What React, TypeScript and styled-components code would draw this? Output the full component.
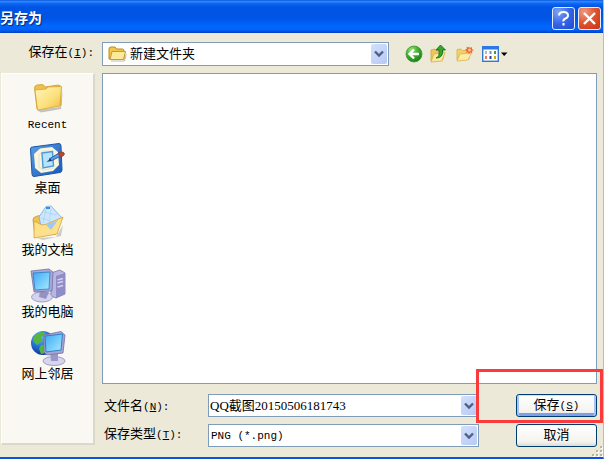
import React from "react";
import styled, { createGlobalStyle, css } from "styled-components";

const cjk = `"Noto Sans CJK SC", sans-serif`;

const GlobalStyle = createGlobalStyle`
  *, *::before, *::after { box-sizing: border-box; }
  body {
    margin: 0;
    background: #fff;
    color: #000;
    font: 13px/16px ${cjk};
  }
`;

const Dialog = styled.main`
  display: flex;
  flex-direction: column;
  height: calc(100vh - 3px);
  min-height: 440px;
  background: #ece9d8;
  border-bottom: 2px solid #0a52e0;
  border-right: 1px solid #a9bce6;
  overflow: hidden;
`;

const TitleBar = styled.header`
  display: flex;
  align-items: center;
  gap: 3px;
  height: 33px;
  flex: none;
  padding: 3px 2px 0 0;
  background: linear-gradient(
    #0a4fd6 0,
    #2a8bff 4%,
    #0a63ee 12%,
    #0054e3 22%,
    #0055e5 55%,
    #0066ff 80%,
    #0064fa 90%,
    #003fc4 100%
  );
`;

const Title = styled.h1`
  flex: 1;
  margin: 0;
  padding-bottom: 2px;
  color: #fff;
  font-size: 14px;
  line-height: 20px;
  font-weight: 700;
  text-shadow: 1px 1px 1px #0a2a80;
`;

const CaptionButton = styled.button<{ $close?: boolean }>`
  display: grid;
  place-items: center;
  width: 23px;
  height: 23px;
  padding: 0;
  border: 1px solid #e6eeff;
  border-radius: 3px;
  background: ${(p) =>
    p.$close
      ? "radial-gradient(circle at 25% 20%, #f09a80, #e0502c 50%, #c43510)"
      : "radial-gradient(circle at 25% 20%, #7fa4f6, #3566e6 50%, #1d49cf)"};
`;

const Content = styled.div`
  display: grid;
  flex: 1;
  min-height: 0;
  grid-template-columns: 94px minmax(0, 1fr);
  grid-template-rows: 24px minmax(0, 1fr);
  column-gap: 7px;
  row-gap: 7px;
  padding: 9px 6px 13px 1px;
`;

const Label = styled.label<{ $end?: boolean; $top?: boolean }>`
  line-height: 18px;
  white-space: nowrap;
  ${(p) => p.$end && css`text-align: right; padding-right: 1px;`}
  ${(p) => p.$top && css`align-self: start;`}
`;

const Key = styled.span`
  font: 11px/16px "Liberation Mono", monospace;
`;

const Toolbar = styled.div`
  display: flex;
  align-items: center;
  gap: 16px;
`;

const Combo = styled.div<{ $wide?: boolean }>`
  display: flex;
  align-items: center;
  height: ${(p) => (p.$wide ? "24px" : "23px")};
  ${(p) => p.$wide && css`flex: 0 1 287px; padding-left: 5px;`}
  min-width: 0;
  border: 1px solid #7f9db9;
  background: #fff;
`;

const fieldText = css<{ $latin?: boolean }>`
  flex: 1;
  min-width: 0;
  height: 20px;
  margin: 0;
  border: 0;
  outline: 0;
  appearance: none;
  background: transparent;
  color: #000;
  font: ${(p) =>
    p.$latin
      ? `11px/20px "Liberation Mono", monospace`
      : `13px/20px "Liberation Serif", ${cjk}`};
`;

const Choice = styled.select<{ $latin?: boolean }>`
  ${fieldText}
  padding: 0 ${(p) => (p.$latin ? "2px" : "3px")};
`;

const TextBox = styled.input`
  ${fieldText}
  padding: 0 1px;
`;

const Drop = styled.span`
  display: grid;
  place-items: center;
  width: 16px;
  align-self: stretch;
  margin: 1px;
  border-radius: 2px;
  background: linear-gradient(135deg, #d3dffd, #b7caf5);
  pointer-events: none;
`;

const Tools = styled.div`
  display: flex;
  align-items: center;
  gap: 6px;
`;

const ToolButton = styled.button`
  display: flex;
  align-items: center;
  padding: 0;
  border: 0;
  background: none;
`;

const Places = styled.nav`
  display: flex;
  flex-direction: column;
  gap: 8px;
  padding-top: 5px;
  background: #f9f8f3;
  border: 1px solid #fff;
  border-right: 2px solid #dbd8c9;
  border-bottom: 2px solid #dbd8c9;
`;

const Place = styled.a<{ $latin?: boolean }>`
  display: flex;
  flex-direction: column;
  align-items: center;
  color: #000;
  text-decoration: none;
  font: ${(p) =>
    p.$latin ? `11px/16px "Liberation Mono", monospace` : `13px/16px ${cjk}`};
`;

const Main = styled.section`
  display: flex;
  flex-direction: column;
  gap: 10px;
  min-width: 0;
`;

const FileList = styled.div`
  flex: 1;
  min-height: 0;
  background: #fff;
  border: 1px solid #7f9db9;
`;

const SaveForm = styled.form`
  display: grid;
  grid-template-columns: 104px minmax(0, 1fr) 81px;
  row-gap: 7px;
  align-items: center;
  padding-left: 2px;
  margin-bottom: -2px;
`;

const FieldCell = styled.div`
  margin-right: 37px;
`;

const Highlighted = styled.div`
  position: relative;
`;

const HighlightFrame = styled.span`
  position: absolute;
  inset: -25px -6px -6px -40px;
  border: 3px solid #fb3b3b;
  pointer-events: none;
`;

const PushButton = styled.button<{ $primary?: boolean }>`
  display: block;
  width: 100%;
  height: 23px;
  padding: 0 0 3px;
  border: 1px solid #003c74;
  border-radius: 3px;
  color: #000;
  font: 13px/18px ${cjk};
  background: linear-gradient(#fff, #f4f3ee 80%, #dedbd0);
  ${(p) =>
    p.$primary &&
    css`
      box-shadow: inset 0 1px #cee0fd, inset 2px 0 #a9c3f4,
        inset -2px 0 #a9c3f4, inset 0 -3px #7f9fe6;
    `}
`;

const Grip = styled.svg`
  display: block;
  align-self: flex-end;
  flex: none;
  margin: -13px 0 0;
`;

const DropArrow = () => (
  <Drop>
    <svg width="10" height="8" viewBox="0 0 10 8" aria-hidden="true">
      <path d="M1 1.5 5 5.5 9 1.5" fill="none" stroke="#4d6185" strokeWidth="2.4" />
    </svg>
  </Drop>
);

const OpenFolder = () => (
  <svg width="19" height="18" viewBox="0 0 19 18" aria-hidden="true">
    <path d="M1 14V4Q1 2 3 2H7L8.500 4H14.500Q16 4 16 6V14Z" fill="#f1c64b" stroke="#b98a1e" />
    <path d="M4 6.500H17.500L15.500 14.500H2Z" fill="#fde99a" stroke="#c79a2b" strokeLinejoin="round" />
    <path d="M3 16H16.500L18.300 9" fill="none" stroke="#8a7a4d" strokeOpacity=".5" />
  </svg>
);

const BackIcon = () => (
  <svg width="18" height="18" viewBox="0 0 18 18" aria-hidden="true">
    <defs>
      <radialGradient id="back" cx=".35" cy=".25" r=".8">
        <stop offset="0" stopColor="#9be07e" />
        <stop offset=".5" stopColor="#3fae2f" />
        <stop offset="1" stopColor="#1d7a17" />
      </radialGradient>
    </defs>
    <circle cx="9" cy="9" r="8" fill="url(#back)" stroke="#3b9a30" strokeWidth=".8" />
    <path d="M14 9H5M9 4.500 4.500 9 9 13.500" fill="none" stroke="#fff" strokeWidth="2.400" />
  </svg>
);

const UpIcon = () => (
  <svg width="20" height="20" viewBox="0 0 20 20" aria-hidden="true">
    <path d="M2 17V6L6 5 7.500 6.500 14 5.500V15Z" fill="#edc55d" stroke="#d5a53a" strokeWidth=".8" />
    <path d="M2 18 5 10 16 8.500 13 17Z" fill="#fce99f" stroke="#d8ad46" strokeWidth=".8" />
    <path d="M7 14Q11 13 10 6H7L11.500 1 16.500 6H13.500Q14.500 14 7 14Z" fill="#35a52d" stroke="#17701a" strokeWidth=".9" />
  </svg>
);

const NewFolderIcon = () => (
  <svg width="20" height="18" viewBox="0 0 20 18" aria-hidden="true">
    <path d="M2 15V4.500L6 4 7.500 5.500H14V14Z" fill="#f3cf68" stroke="#d9ad49" strokeWidth=".8" />
    <path d="M2 16 5 9 16.500 8 13 15Z" fill="#fdeca8" stroke="#dcb352" strokeWidth=".8" />
    <path d="m14 1.500 1 1.500 2-1v2.200l2 .8-2 1 .3 2.200-2-.7-1.300 1.500-1-1.700-2 .4.600-2-1.600-1.200 1.800-.8-.3-2 1.800.800Z" fill="#ef6a35" />
    <circle cx="14.500" cy="5" r="1.500" fill="#ffc29a" />
  </svg>
);

const ViewIcon = () => (
  <svg width="27" height="18" viewBox="0 0 27 18" aria-hidden="true">
    <rect x="1.700" y="1.700" width="15.600" height="14.600" fill="#fff" stroke="#3678cf" strokeWidth="1.400" />
    <path d="M1 1H18V4.500H1Z" fill="#2a79e4" />
    <path d="M4 6h2v3H4z" fill="#a8b9d3" />
    <path d="M8.500 6h2v3h-2z" fill="#8b83c9" />
    <path d="M13 6h2v3h-2z" fill="#31a04a" />
    <path d="M4 11h2v3H4z" fill="#ea7d46" />
    <path d="M8.500 11h2v3h-2z" fill="#27408f" />
    <path d="M13 11h2v3h-2z" fill="#c5a51a" />
    <path d="M20 7.500h6.500L23.200 11Z" fill="#000" />
  </svg>
);

const iconProps = {
  width: 38,
  height: 38,
  viewBox: "0 0 38 38",
  overflow: "visible",
  "aria-hidden": true,
} as const;

const RecentIcon = () => (
  <svg {...iconProps}>
    <defs>
      <linearGradient id="fold" x1="0" y1="0" x2="1" y2="1">
        <stop offset="0" stopColor="#fff6bd" />
        <stop offset=".6" stopColor="#fbdf7a" />
        <stop offset="1" stopColor="#edba3e" />
      </linearGradient>
    </defs>
    <path d="M8 31 31 28 34 11 32 30 12 33.500Z" fill="#80807a" opacity=".45" />
    <path d="M5.500 9Q5.500 6.500 8 6L13 5.500Q15 5.500 16 8L29 6Q32 6 32 9V26L8 30Z" fill="#efc04a" stroke="#cf9c2d" strokeWidth=".8" />
    <path d="M6 11 17 10 19 8 32.500 7.500 31 27 8.500 31Z" fill="url(#fold)" stroke="#d6a535" strokeWidth=".8" strokeLinejoin="round" />
  </svg>
);

const DesktopIcon = () => (
  <svg {...iconProps}>
    <defs>
      <linearGradient id="desk" x1="0" y1="0" x2="1" y2="1">
        <stop offset="0" stopColor="#5c9fe8" />
        <stop offset="1" stopColor="#1557b8" />
      </linearGradient>
    </defs>
    <path d="M1.500 8Q1.500 6 3.500 6L30 2.500Q32 2.500 32 5L33 29Q33 31 31 31.500L5 35.500Q3 35.500 3 33Z" fill="url(#desk)" stroke="#1c56a8" />
    <path d="M5 13 11 7.500 23 6 29 11 30 24 24 30 12 32 6 27Z" fill="#fbf5dc" />
    <path d="M24 10 14 10 10 14V26L14 29 25 27" fill="none" stroke="#e3e6da" strokeWidth="1.200" />
    <path d="M13 12 23.500 10.500 24.500 25 14 27Z" fill="#b9e2fc" stroke="#4a99dc" strokeWidth="1.400" />
    <path d="M20 18 30 12 32 15 22 20Z" fill="#5a9dde" stroke="#174f9a" strokeWidth=".8" />
    <path d="m17.500 21 4-3.500 1 2.500Z" fill="#153b78" />
    <path d="M29 12 34 11Q37 13 34 15L31 16Z" fill="#bf4430" stroke="#8b3830" strokeWidth=".7" />
  </svg>
);

const DocumentsIcon = () => (
  <svg {...iconProps}>
    <path d="M8 35 27 34 34 22 32 33 14 37Z" fill="#777" opacity=".35" />
    <path d="M4 17Q4 14 7 13.500L10 12.500 13 15 28 13 27 31 6 33Z" fill="#efc352" stroke="#cc9830" strokeWidth=".8" />
    <path d="M10 14 17 3.500 22 3 33 15 24 28 13 27Z" fill="#cce7fd" stroke="#76a9dd" strokeWidth=".8" />
    <path d="M15 9 28 12M12 15 27 20M17 6 14 20M22 6 20 20" stroke="#a9d0f2" strokeWidth=".7" />
    <path d="M17 4h4v2h-4z" fill="#3a8ddd" />
    <path d="M5 35V18L13 22 18 21 34 14 28 31Z" fill="#fde18a" stroke="#d3a138" strokeWidth=".8" strokeLinejoin="round" />
    <path d="M17 22 29 17 22 27Z" fill="#9dcaf3" />
  </svg>
);

const screenStops = (
  <>
    <stop offset="0" stopColor="#3ca8f4" />
    <stop offset="1" stopColor="#a8ecff" />
  </>
);

const ComputerIcon = () => (
  <svg {...iconProps} viewBox="0 -3 38 38">
    <defs>
      <linearGradient id="pc" x1="0" y1="0" x2="1" y2="1">{screenStops}</linearGradient>
    </defs>
    <path d="M22 5 31 2 36 5V26L27 30 22 28Z" fill="#b9b7e0" stroke="#7773ac" strokeWidth=".8" />
    <path d="M27 8 36 5V26L27 30Z" fill="#8f8cc8" />
    <path d="M28.500 12 34 10.500M28.500 15 34 13.500M28.500 19 34 17.500" stroke="#d3d2f4" strokeWidth="1.300" />
    <ellipse cx="13" cy="29" rx="10.500" ry="5" fill="#d4d2ed" stroke="#908fbc" strokeWidth=".8" />
    <path d="M11 23 20 24 17 31 10 29Z" fill="#9491c5" />
    <path d="M2 3 20 1 24 4 23 23 5 24Z" fill="#a9a7d5" stroke="#7471a5" strokeWidth=".8" />
    <path d="M4 5 21 4 20 21 6 22Z" fill="url(#pc)" stroke="#287cc6" strokeWidth=".8" />
  </svg>
);

const NetworkIcon = () => (
  <svg {...iconProps} viewBox="0 -3 38 38">
    <defs>
      <radialGradient id="globe" cx=".35" cy=".25" r=".8">
        <stop offset="0" stopColor="#7cc7ff" />
        <stop offset=".5" stopColor="#226fd7" />
        <stop offset="1" stopColor="#102e87" />
      </radialGradient>
      <linearGradient id="net" x1="0" y1="0" x2="1" y2="1">{screenStops}</linearGradient>
    </defs>
    <circle cx="14" cy="13" r="12" fill="url(#globe)" />
    <path d="M4 8Q8 2 14 2L17 4 12 7 14 10 8 15 5 12ZM12 15 18 14 17 23 12 24 10 19Z" fill="#56b63b" />
    <ellipse cx="25" cy="31" rx="11" ry="4.500" fill="#d7d5ed" stroke="#8f8dba" strokeWidth=".8" />
    <path d="M21 22 29 22 29 31 22 31Z" fill="#9b98c9" />
    <path d="M15 5 32 1.500 36 5 34 23 18 25 15 22Z" fill="#a6a4d4" stroke="#7471a7" strokeWidth=".8" />
    <path d="M16 6 33.500 4 32 20 17 22Z" fill="url(#net)" stroke="#2679c0" strokeWidth=".9" />
  </svg>
);

const places = [
  { name: "Recent", Icon: RecentIcon, latin: true },
  { name: "桌面", Icon: DesktopIcon },
  { name: "我的文档", Icon: DocumentsIcon },
  { name: "我的电脑", Icon: ComputerIcon },
  { name: "网上邻居", Icon: NetworkIcon },
];

const gripDots = [
  [10, 1], [6, 5], [10, 5], [2, 9], [6, 9], [10, 9],
];

export default function App() {
  return (
    <>
      <GlobalStyle />
      <Dialog role="dialog" aria-labelledby="title">
        <TitleBar>
          <Title id="title">另存为</Title>
          <CaptionButton type="button" aria-label="帮助">
            <svg width="17" height="17" viewBox="0 0 17 17" aria-hidden="true">
              <path d="M4 5.500Q4 2 8.500 2T13 5.500Q13 7.500 10.500 8.500T8.500 11.500M8.500 13V15.500" fill="none" stroke="#fff" strokeWidth="2" />
            </svg>
          </CaptionButton>
          <CaptionButton type="button" $close aria-label="关闭">
            <svg width="15" height="15" viewBox="0 0 15 15" aria-hidden="true">
              <path d="M2 2 13 13M13 2 2 13" stroke="#fff" strokeWidth="2.400" />
            </svg>
          </CaptionButton>
        </TitleBar>
        <Content>
          <Label $end htmlFor="folder">
            保存在<Key>(<u>I</u>):</Key>
          </Label>
          <Toolbar>
            <Combo $wide>
              <OpenFolder />
              <Choice id="folder">
                <option>新建文件夹</option>
              </Choice>
              <DropArrow />
            </Combo>
            <Tools>
              <ToolButton type="button" aria-label="后退"><BackIcon /></ToolButton>
              <ToolButton type="button" aria-label="向上"><UpIcon /></ToolButton>
              <ToolButton type="button" aria-label="新建文件夹"><NewFolderIcon /></ToolButton>
              <ToolButton type="button" aria-label="查看"><ViewIcon /></ToolButton>
            </Tools>
          </Toolbar>
          <Places aria-label="位置">
            {places.map(({ name, Icon, latin }) => (
              <Place key={name} href="#" $latin={latin}>
                <Icon />
                {name}
              </Place>
            ))}
          </Places>
          <Main>
            <FileList role="listbox" aria-label="文件" />
            <SaveForm onSubmit={(e) => e.preventDefault()}>
              <Label htmlFor="name">
                文件名<Key>(<u>N</u>):</Key>
              </Label>
              <FieldCell>
                <Combo>
                  <TextBox id="name" defaultValue="QQ截图20150506181743" />
                  <DropArrow />
                </Combo>
              </FieldCell>
              <Highlighted>
                <PushButton type="submit" $primary>
                  保存<Key>(<u>S</u>)</Key>
                </PushButton>
                <HighlightFrame />
              </Highlighted>
              <Label $top htmlFor="type">
                保存类型<Key>(<u>T</u>):</Key>
              </Label>
              <FieldCell>
                <Combo>
                  <Choice id="type" $latin>
                    <option>PNG (*.png)</option>
                  </Choice>
                  <DropArrow />
                </Combo>
              </FieldCell>
              <PushButton type="button">取消</PushButton>
            </SaveForm>
          </Main>
        </Content>
        <Grip width="13" height="12" viewBox="0 0 13 12" aria-hidden="true">
          {gripDots.map(([x, y]) => (
            <g key={`${x}-${y}`}>
              <path d={`M${x + 1} ${y + 1}h2v2h-2z`} fill="#fff" />
              <path d={`M${x} ${y}h2v2h-2z`} fill="#b8b4a3" />
            </g>
          ))}
        </Grip>
      </Dialog>
    </>
  );
}
